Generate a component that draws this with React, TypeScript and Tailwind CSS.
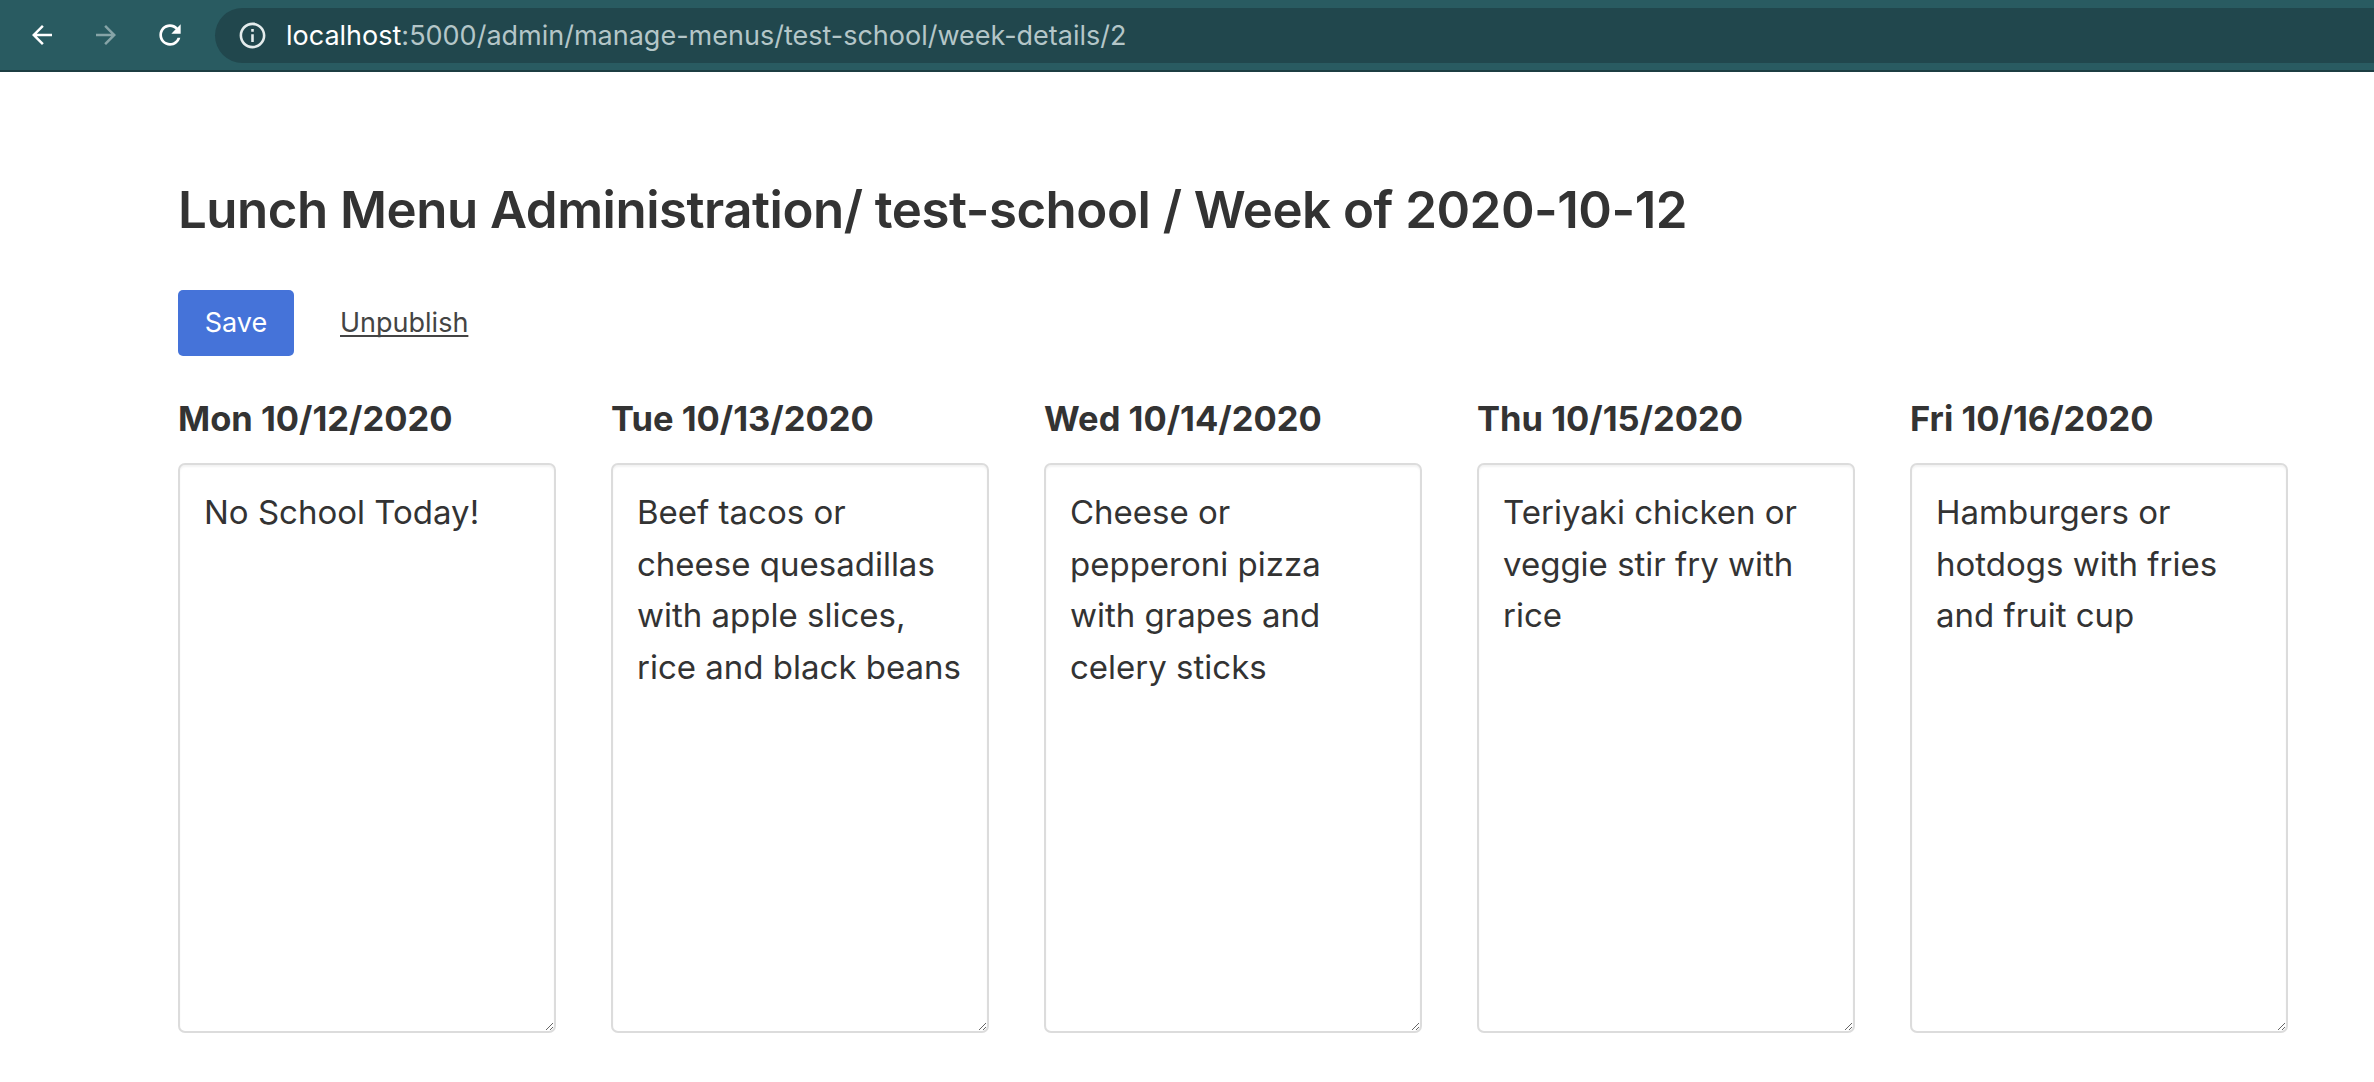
import React from 'react';

const days = [
  { label: 'Mon 10/12/2020', menu: 'No School Today!' },
  { label: 'Tue 10/13/2020', menu: 'Beef tacos or cheese quesadillas with apple slices, rice and black beans' },
  { label: 'Wed 10/14/2020', menu: 'Cheese or pepperoni pizza with grapes and celery sticks' },
  { label: 'Thu 10/15/2020', menu: 'Teriyaki chicken or veggie stir fry with rice' },
  { label: 'Fri 10/16/2020', menu: 'Hamburgers or hotdogs with fries and fruit cup' },
];

function BrowserBar() {
  return (
    <div className="h-[72px] bg-[#295b61] border-b-2 border-[#1c3d42] flex items-center">
      {/* Back */}
      <svg viewBox="0 0 24 24" className="w-[30px] h-[30px] ml-[27px] fill-white">
        <path d="M20 11H7.83l5.59-5.59L12 4l-8 8 8 8 1.41-1.41L7.83 13H20v-2z" />
      </svg>
      {/* Forward */}
      <svg viewBox="0 0 24 24" className="w-[30px] h-[30px] ml-[34px] fill-[#86a4a7]">
        <path d="M4 11h12.17l-5.59-5.59L12 4l8 8-8 8-1.41-1.41L16.17 13H4v-2z" />
      </svg>
      {/* Reload */}
      <svg viewBox="0 0 24 24" className="w-[32px] h-[32px] ml-[33px] fill-white">
        <path d="M17.65 6.35C16.2 4.9 14.21 4 12 4c-4.42 0-7.99 3.58-7.99 8s3.57 8 7.99 8c3.73 0 6.84-2.55 7.73-6h-2.08c-.82 2.33-3.04 4-5.65 4-3.31 0-6-2.69-6-6s2.69-6 6-6c1.66 0 3.14.69 4.22 1.78L13 11h7V4l-2.35 2.35z" />
      </svg>
      <div className="ml-[29px] flex-1 h-[55px] rounded-l-full bg-[#21474d] flex items-center pl-[22px]">
        <svg viewBox="0 0 24 24" className="w-[31px] h-[31px] fill-[#e4ecec]">
          <path d="M11 7h2v2h-2zm0 4h2v6h-2zm1-9C6.48 2 2 6.48 2 12s4.48 10 10 10 10-4.48 10-10S17.52 2 12 2zm0 18c-4.41 0-8-3.59-8-8s3.59-8 8-8 8 3.59 8 8-3.59 8-8 8z" />
        </svg>
        <div className="ml-[18px] text-[27px] font-['Inter',sans-serif] leading-none">
          <span className="text-white">localhost</span>
          <span className="text-[#b4c6c8]">:5000/admin/manage-menus/test-school/week-details/2</span>
        </div>
      </div>
    </div>
  );
}

export default function App() {
  return (
    <div className="min-h-screen bg-white font-['Inter',sans-serif] text-[#333]">
      <BrowserBar />
      <div className="pl-[178px] pt-[107px]">
        <h2 className="text-[51px] leading-[61px] font-semibold tracking-[-0.5px]">
          Lunch Menu Administration/ test-school / Week of 2020-10-12
        </h2>

        <div className="mt-[50px] flex items-center gap-[46px]">
          <button className="w-[116px] h-[66px] rounded-[5px] bg-[#4573d9] text-white text-[27px]">
            Save
          </button>
          <a
            href="#"
            className="text-[27px] text-[#444] underline underline-offset-[3px] [text-decoration-skip-ink:none]"
          >
            Unpublish
          </a>
        </div>

        <div className="mt-[42px] flex gap-[55px]">
          {days.map((d) => (
            <div key={d.label} className="w-[378px] flex flex-col">
              <h5 className="text-[34.5px] leading-[41px] font-bold">{d.label}</h5>
              <textarea
                defaultValue={d.menu}
                className="mt-[24px] h-[570px] w-full border-2 border-[#dcdcdc] rounded-[7px] pl-[24px] pr-[25px] pt-[22px] text-[33px] leading-[51.5px] text-[#333] shadow-[inset_0_2px_2px_rgba(0,0,0,0.05)] outline-none"
              />
            </div>
          ))}
        </div>
      </div>
    </div>
  );
}
